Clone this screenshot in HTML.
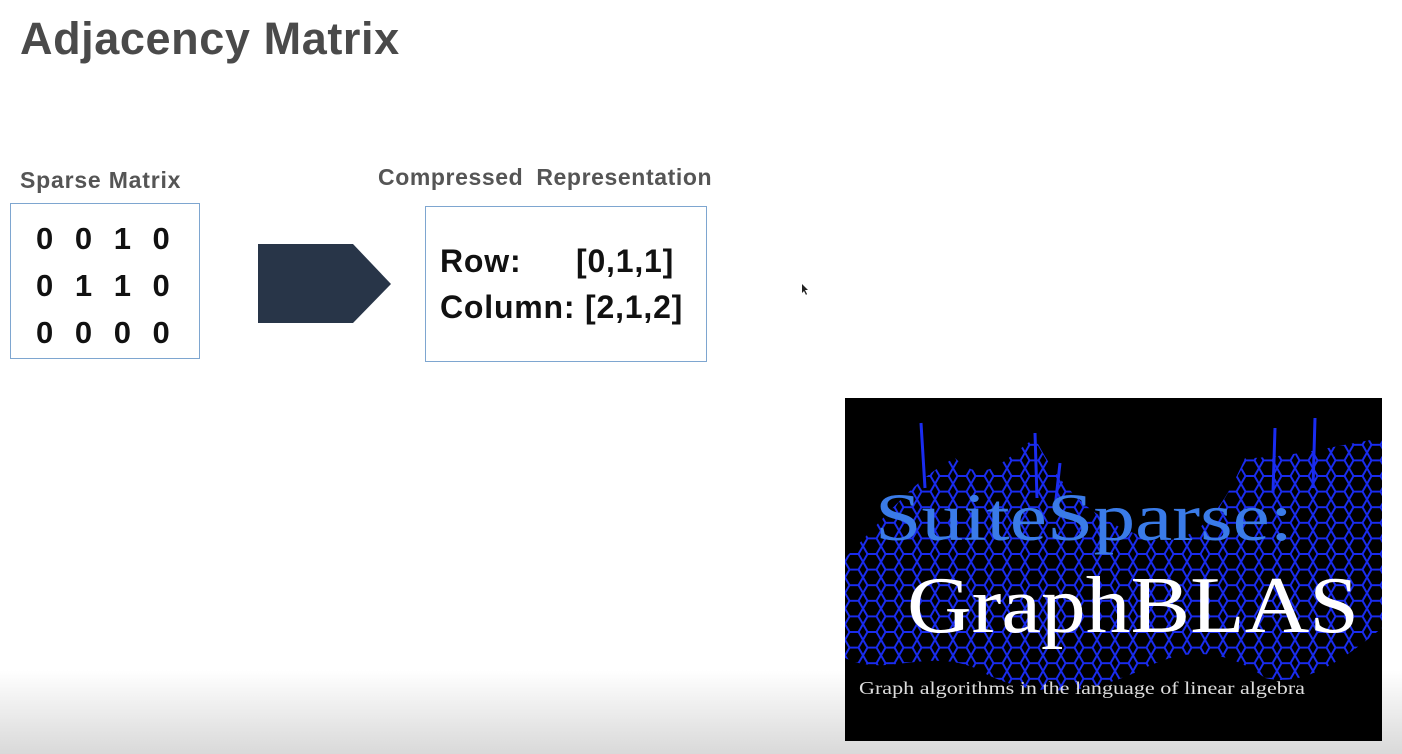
<!DOCTYPE html>
<html><head><style>
body{margin:0;width:1402px;height:754px;background:#fff;position:relative;overflow:hidden;font-family:"Liberation Sans",sans-serif}
.t{position:absolute;font-weight:bold}
.box{position:absolute;border:1px solid #7ea6d0;box-sizing:border-box}
.grad{position:absolute;left:0;right:0;top:670px;height:84px;background:linear-gradient(#fff,#d9d9d9)}
</style></head><body>
<div class="grad"></div>
<div class="t" style="left:20px;top:13px;font-size:45px;color:#4a4a4a;letter-spacing:0.6px">Adjacency Matrix</div>
<div class="t" style="left:20px;top:167px;font-size:23px;color:#555;letter-spacing:0.8px">Sparse Matrix</div>
<div class="t" style="left:378px;top:164px;font-size:23px;color:#555;letter-spacing:0.6px;word-spacing:6px">Compressed Representation</div>
<div class="box" style="left:10px;top:203px;width:190px;height:156px"></div>
<div class="t" style="left:36px;top:215px;font-size:31px;line-height:47px;color:#111;word-spacing:13px">0 0 1 0<br>0 1 1 0<br>0 0 0 0</div>
<svg style="position:absolute;left:258px;top:244px" width="134" height="80"><polygon points="0,0 95,0 133,40 95,79 0,79" fill="#283548"/></svg>
<div class="box" style="left:425px;top:206px;width:282px;height:156px"></div>
<div class="t" style="left:440px;top:238px;font-size:32px;color:#111;line-height:46px;letter-spacing:0.8px"><span style="display:inline-block;width:136px">Row:</span>[0,1,1]<br>Column: [2,1,2]</div>
<svg style="position:absolute;left:801px;top:283px" width="10" height="14"><path d="M1,1 L1,10 L3,8 L5,12 L6,11 L4,7 L7,7Z" fill="#222"/></svg>
<svg style="position:absolute;left:845px;top:398px" width="537" height="343">
<defs>
<pattern id="h" width="18" height="15.6" patternUnits="userSpaceOnUse">
<path d="M0,7.8 L4.5,0 L13.5,0 L18,7.8 L13.5,15.6 L4.5,15.6Z M18,7.8 L22,7.8 M-4,7.8 L0,7.8" fill="none" stroke="#1a2cf0" stroke-width="2"/>
</pattern>
<clipPath id="c"><path d="M0,160 C40,120 70,80 110,60 C140,90 160,60 190,40 C230,120 280,130 300,140 C340,150 370,130 400,60 C440,60 480,50 537,40 L537,230 C500,260 460,290 420,280 C380,250 340,250 300,270 C240,300 180,300 130,270 C80,250 40,280 0,260Z"/></clipPath>
</defs>
<rect width="537" height="343" fill="#000"/>
<rect width="537" height="343" fill="url(#h)" clip-path="url(#c)"/>
<path d="M76,25 L80,90 M190,35 L192,100 M215,65 L210,110 M430,30 L428,95 M470,20 L468,90" stroke="#1a2cf0" stroke-width="3"/>
<text x="30" y="142" font-family="Liberation Serif,serif" font-size="68" fill="#3a7be8" textLength="418" lengthAdjust="spacingAndGlyphs">SuiteSparse:</text>
<text x="62" y="234" font-family="Liberation Serif,serif" font-size="80" fill="#fff" textLength="452" lengthAdjust="spacingAndGlyphs">GraphBLAS</text>
<text x="14" y="296" font-family="Liberation Serif,serif" font-size="18" fill="#ddd" textLength="446" lengthAdjust="spacingAndGlyphs">Graph algorithms in the language of linear algebra</text>
</svg>
</body></html>
